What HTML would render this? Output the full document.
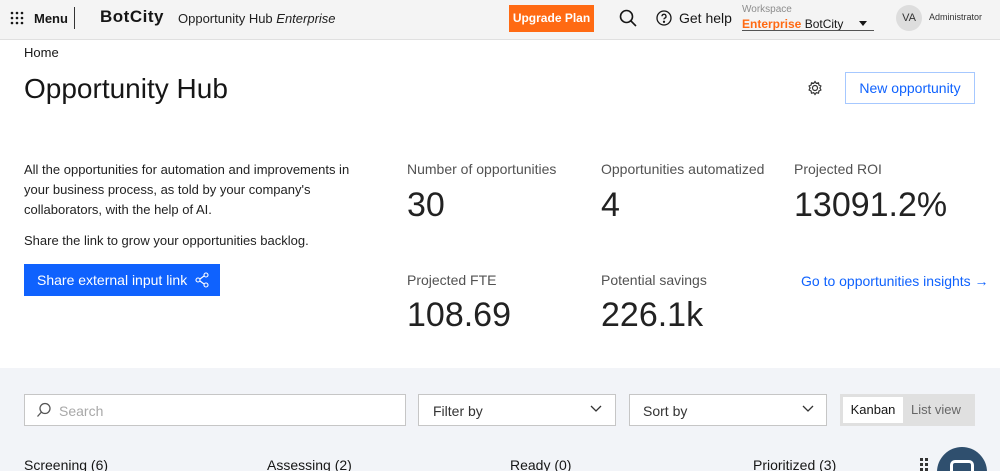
<!DOCTYPE html>
<html><head><meta charset="utf-8"><style>
*{margin:0;padding:0;box-sizing:border-box}
html,body{width:1000px;height:471px;overflow:hidden}
body{font-family:"Liberation Sans",sans-serif;background:#f2f4f8;color:#161616;position:relative}
.a{position:absolute;white-space:nowrap}
.hdr{position:absolute;left:0;top:0;width:1000px;height:40px;background:#f4f4f4;border-bottom:1px solid #e0e0e0}
.main{position:absolute;left:0;top:40px;width:1000px;height:328px;background:#fff}
.lbl{font-size:14px;color:#525252}
.big{font-size:34px;color:#222;font-weight:300}
.box{position:absolute;background:#fff;border:1px solid #c6c6c6;height:32px;top:394px}
.col{font-size:14px;color:#161616;top:457px}
</style></head><body>
<div class="hdr"></div>
<svg class="a" style="left:10px;top:11px" width="14" height="14"><g fill="#161616"><circle cx="2" cy="2" r="1.3"/><circle cx="7" cy="2" r="1.3"/><circle cx="12" cy="2" r="1.3"/><circle cx="2" cy="7" r="1.3"/><circle cx="7" cy="7" r="1.3"/><circle cx="12" cy="7" r="1.3"/><circle cx="2" cy="12" r="1.3"/><circle cx="7" cy="12" r="1.3"/><circle cx="12" cy="12" r="1.3"/></g></svg>
<div class="a" style="left:34px;top:11px;font-size:13px;font-weight:bold">Menu</div>
<div class="a" style="left:74px;top:7px;width:1px;height:22px;background:#333"></div>
<div class="a" style="left:100px;top:7px;font-size:17px;font-weight:bold;letter-spacing:0.5px">BotCity</div>
<div class="a" style="left:178px;top:11px;font-size:13px;color:#222">Opportunity Hub <i>Enterprise</i></div>
<div class="a" style="left:509px;top:5px;width:85px;height:27px;background:#ff6a13;color:#fff;font-size:12px;font-weight:bold;text-align:center;line-height:27px">Upgrade Plan</div>
<svg class="a" style="left:619px;top:9px" width="18" height="18" fill="none" stroke="#161616" stroke-width="1.6"><circle cx="7.5" cy="7.5" r="6"/><path d="M12 12l5 5"/></svg>
<svg class="a" style="left:656px;top:10px" width="16" height="16" fill="none" stroke="#161616" stroke-width="1.3"><circle cx="8" cy="8" r="7"/><path d="M6 6.3a2 2 0 1 1 2.6 1.9c-.5.2-.6.6-.6 1.2"/><circle cx="8" cy="11.8" r=".5" fill="#161616"/></svg>
<div class="a" style="left:679px;top:10px;font-size:14px">Get help</div>
<div class="a" style="left:742px;top:4px;font-size:10px;color:#8d8d8d">Workspace</div>
<div class="a" style="left:742px;top:17px;font-size:12px"><b style="color:#ff6a13">Enterprise</b> BotCity</div>
<div class="a" style="left:859px;top:21px;width:0;height:0;border-left:4px solid transparent;border-right:4px solid transparent;border-top:5px solid #161616"></div>
<div class="a" style="left:742px;top:30px;width:132px;height:1px;background:#555"></div>
<div class="a" style="left:896px;top:5px;width:26px;height:26px;border-radius:50%;background:#ddd;font-size:11px;text-align:center;line-height:26px;color:#333">VA</div>
<div class="a" style="left:929px;top:12px;font-size:9px;color:#333">Administrator</div>

<div class="main"></div>
<div class="a" style="left:24px;top:45px;font-size:13px">Home</div>
<div class="a" style="left:24px;top:73px;font-size:28px;font-weight:300">Opportunity Hub</div>
<svg class="a" style="left:807px;top:80px" width="16" height="16" fill="none" stroke="#333" stroke-width="1.2"><circle cx="8" cy="8" r="2.5"/><path d="M8 1.5l1.3 1.8 2.2-.5.4 2.2 2 1-1 2 1 2-2 1-.4 2.2-2.2-.5L8 14.5l-1.3-1.8-2.2.5-.4-2.2-2-1 1-2-1-2 2-1 .4-2.2 2.2.5z"/></svg>
<div class="a" style="left:845px;top:72px;width:130px;height:32px;border:1px solid #a6c8ff;color:#0f62fe;font-size:14px;text-align:center;line-height:30px">New opportunity</div>

<div class="a" style="left:24px;top:160px;font-size:13px;line-height:20px;color:#222">All the opportunities for automation and improvements in<br>your business process, as told by your company's<br>collaborators, with the help of AI.</div>
<div class="a" style="left:24px;top:233px;font-size:13px;color:#222">Share the link to grow your opportunities backlog.</div>
<div class="a" style="left:24px;top:264px;width:196px;height:32px;background:#0f62fe;color:#fff;font-size:14px;line-height:32px;padding-left:13px">Share external input link</div>
<svg class="a" style="left:195px;top:272px" width="14" height="16" fill="none" stroke="#fff" stroke-width="1.1"><circle cx="11" cy="3" r="2"/><circle cx="3" cy="8" r="2"/><circle cx="11" cy="13" r="2"/><path d="M5 7l4-3M5 9l4 3"/></svg>

<div class="a lbl" style="left:407px;top:161px">Number of opportunities</div>
<div class="a big" style="left:407px;top:186px">30</div>
<div class="a lbl" style="left:601px;top:161px">Opportunities automatized</div>
<div class="a big" style="left:601px;top:186px">4</div>
<div class="a lbl" style="left:794px;top:161px">Projected ROI</div>
<div class="a big" style="left:794px;top:186px">13091.2%</div>
<div class="a lbl" style="left:407px;top:272px">Projected FTE</div>
<div class="a big" style="left:407px;top:296px">108.69</div>
<div class="a lbl" style="left:601px;top:272px">Potential savings</div>
<div class="a big" style="left:601px;top:296px">226.1k</div>
<div class="a" style="left:801px;top:273px;font-size:14px;color:#0f62fe">Go to opportunities insights →</div>

<div class="box" style="left:24px;width:382px"></div>
<svg class="a" style="left:36px;top:402px" width="16" height="16" fill="none" stroke="#555" stroke-width="1.3"><circle cx="9" cy="6.5" r="5"/><path d="M5.5 10L1.5 14.5"/></svg>
<div class="a" style="left:59px;top:403px;font-size:14px;color:#a8a8a8">Search</div>
<div class="box" style="left:418px;width:198px"></div>
<div class="a" style="left:433px;top:403px;font-size:14px;color:#333">Filter by</div>
<svg class="a" style="left:590px;top:405px" width="12" height="8" fill="none" stroke="#333" stroke-width="1.3"><path d="M1 1l5 5 5-5"/></svg>
<div class="box" style="left:629px;width:198px"></div>
<div class="a" style="left:643px;top:403px;font-size:14px;color:#333">Sort by</div>
<svg class="a" style="left:802px;top:405px" width="12" height="8" fill="none" stroke="#333" stroke-width="1.3"><path d="M1 1l5 5 5-5"/></svg>
<div class="a" style="left:840px;top:394px;width:135px;height:32px;background:#e0e0e0"></div>
<div class="a" style="left:843px;top:397px;width:60px;height:26px;background:#fff;font-size:13px;text-align:center;line-height:26px;color:#161616">Kanban</div>
<div class="a" style="left:911px;top:402px;font-size:13px;color:#666">List view</div>

<div class="a col" style="left:24px">Screening (6)</div>
<div class="a col" style="left:267px">Assessing (2)</div>
<div class="a col" style="left:510px">Ready (0)</div>
<div class="a col" style="left:753px">Prioritized (3)</div>
<svg class="a" style="left:919px;top:457px" width="10" height="14" fill="#333"><rect x="1" y="1" width="3" height="3"/><rect x="6" y="1" width="3" height="3"/><rect x="1" y="6" width="3" height="3"/><rect x="6" y="6" width="3" height="3"/><rect x="1" y="11" width="3" height="3"/><rect x="6" y="11" width="3" height="3"/></svg>
<div class="a" style="left:937px;top:447px;width:50px;height:50px;border-radius:50%;background:#2f4f6e"></div>
<div class="a" style="left:950px;top:460px;width:24px;height:20px;border:3px solid #fff;border-radius:5px;background:#2f4f6e"></div>
</body></html>
